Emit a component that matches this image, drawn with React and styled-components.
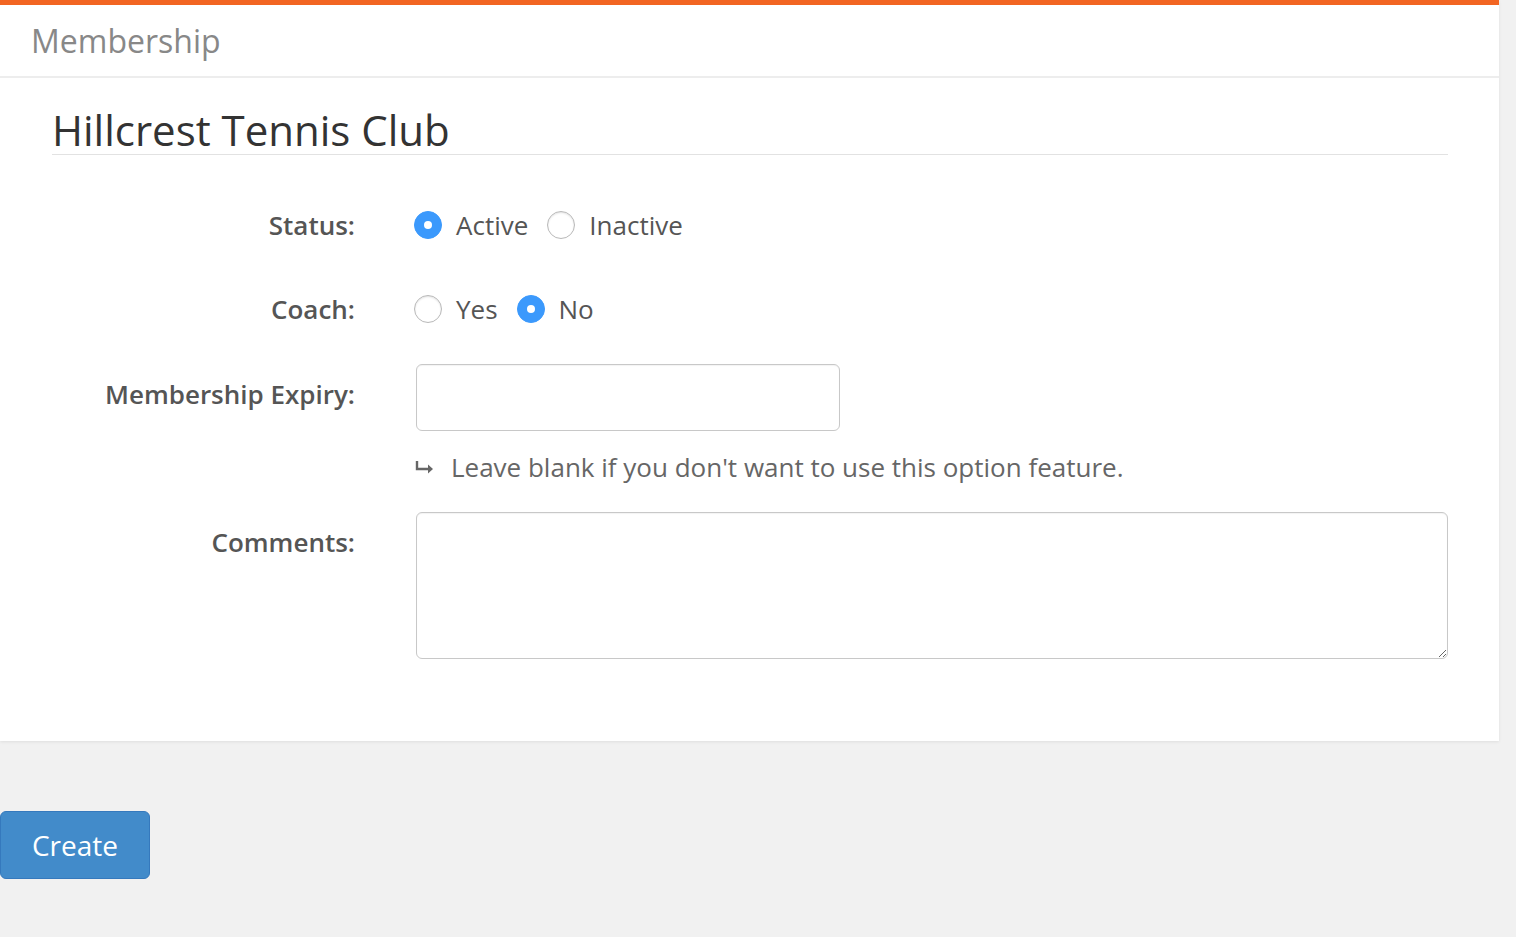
import styled, { createGlobalStyle } from 'styled-components';

const GlobalStyle = createGlobalStyle`
  body {
    margin: 0;
    background: #f1f1f1;
    font-family: "Open Sans", "Liberation Sans", sans-serif;
    color: #555;
  }
`;

const Page = styled.div`
  width: 1499px;
`;

const Card = styled.section`
  background: #fff;
  border-top: 5px solid #f26522;
  box-shadow: 0 1px 3px rgba(0, 0, 0, 0.08);
`;

const CardHeader = styled.header`
  height: 71px;
  display: flex;
  align-items: center;
  padding-left: 31px;
  border-bottom: 2px solid #ededed;
  font-size: 32px;
  color: #888;
`;

const CardBody = styled.div`
  padding: 28px 51px 82px 52px;
`;

const Title = styled.h1`
  margin: 0 0 40px;
  font-size: 42px;
  font-weight: 400;
  line-height: 48px;
  color: #333;
  border-bottom: 1px solid #e2e2e2;
`;

const Form = styled.form`
  display: grid;
  grid-template-columns: 303px 1fr;
  column-gap: 60px;
  align-items: start;
`;

const Label = styled.label`
  grid-column: 1;
  text-align: right;
  font-size: 26px;
  font-weight: 600;
  line-height: 36px;
  padding-top: 12px;
  margin-bottom: ${(p) => p.$gap ?? 24}px;
  color: #555;
`;

const Control = styled.div`
  grid-column: 2;
  margin-bottom: ${(p) => p.$gap ?? 24}px;
`;

const RadioGroup = styled.div`
  height: 60px;
  display: flex;
  align-items: center;
  margin-left: -1px;
`;

const RadioOption = styled.span`
  display: inline-flex;
  align-items: center;
  gap: 14px;
  margin-right: 19px;
  font-size: 26px;
  color: #555;
`;

const Radio = styled.span`
  width: 28px;
  height: 28px;
  box-sizing: border-box;
  border-radius: 50%;
  display: flex;
  align-items: center;
  justify-content: center;
  background: ${(p) => (p.$checked ? '#3b99fc' : '#fff')};
  border: 1px solid ${(p) => (p.$checked ? '#3b99fc' : '#b9b9b9')};
  box-shadow: ${(p) => (p.$checked ? 'none' : 'inset 0 1px 2px rgba(0,0,0,0.12)')};

  &::after {
    content: '';
    display: ${(p) => (p.$checked ? 'block' : 'none')};
    width: 8px;
    height: 8px;
    border-radius: 50%;
    background: #fff;
  }
`;

const TextInput = styled.input`
  display: block;
  box-sizing: border-box;
  width: 424px;
  height: 67px;
  margin-left: 1px;
  border: 1px solid #c8c8c8;
  border-radius: 6px;
  font: inherit;
  font-size: 26px;
  padding: 0 14px;
  box-shadow: inset 0 1px 1px rgba(0, 0, 0, 0.05);
`;

const Hint = styled.div`
  display: flex;
  align-items: center;
  gap: 16px;
  margin-top: 18px;
  line-height: 36px;
  font-size: 26px;
  color: #666;
`;

const TextArea = styled.textarea`
  display: block;
  box-sizing: border-box;
  width: calc(100% - 1px);
  margin-left: 1px;
  height: 147px;
  border: 1px solid #c8c8c8;
  border-radius: 6px;
  font: inherit;
  font-size: 26px;
  padding: 10px 14px;
  box-shadow: inset 0 1px 1px rgba(0, 0, 0, 0.05);
`;

const Actions = styled.div`
  padding-top: 70px;
`;

const Button = styled.button`
  width: 150px;
  height: 68px;
  background: #428bca;
  border: 1px solid #3579bd;
  border-radius: 6px;
  color: #fff;
  font-family: "Open Sans", "Liberation Sans", sans-serif;
  font-size: 28px;
  cursor: pointer;
`;

const ReturnArrow = () => (
  <svg width="20" height="14" viewBox="0 0 20 14" fill="none">
    <path d="M2 1v8h12" stroke="#666" strokeWidth="2.4" />
    <path d="M13 4.5l5 4.5-5 4.5z" fill="#666" />
  </svg>
);

const App = () => {
  return (
    <Page>
      <GlobalStyle />
      <Card>
        <CardHeader>Membership</CardHeader>
        <CardBody>
          <Title>Hillcrest Tennis Club</Title>
          <Form>
            <Label>Status:</Label>
            <Control>
              <RadioGroup>
                <RadioOption><Radio $checked />Active</RadioOption>
                <RadioOption><Radio />Inactive</RadioOption>
              </RadioGroup>
            </Control>

            <Label $gap={25}>Coach:</Label>
            <Control $gap={25}>
              <RadioGroup>
                <RadioOption><Radio />Yes</RadioOption>
                <RadioOption><Radio $checked />No</RadioOption>
              </RadioGroup>
            </Control>

            <Label $gap={27}>Membership Expiry:</Label>
            <Control $gap={27}>
              <TextInput type="text" />
              <Hint>
                <ReturnArrow />
                Leave blank if you don't want to use this option feature.
              </Hint>
            </Control>

            <Label $gap={0}>Comments:</Label>
            <Control $gap={0}>
              <TextArea />
            </Control>
          </Form>
        </CardBody>
      </Card>
      <Actions>
        <Button type="button">Create</Button>
      </Actions>
    </Page>
  );
};

export default App;
